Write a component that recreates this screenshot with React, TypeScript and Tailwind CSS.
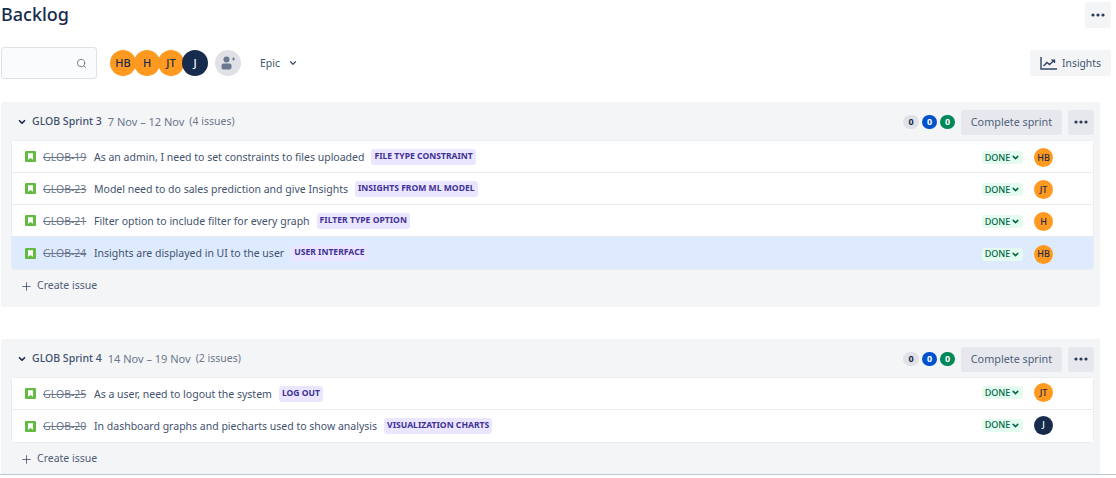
import { ChevronDown, Plus, Search } from "lucide-react";

type Issue = {
  id: string;
  title: string;
  epic: string;
  who: string;
  selected?: boolean;
};

const sprints: {
  name: string;
  dates: string;
  count: string;
  issues: Issue[];
}[] = [
  {
    name: "GLOB Sprint 3",
    dates: "7 Nov – 12 Nov",
    count: "(4 issues)",
    issues: [
      { id: "GLOB-19", title: "As an admin, I need to set constraints to files uploaded", epic: "FILE TYPE CONSTRAINT", who: "HB" },
      { id: "GLOB-23", title: "Model need to do sales prediction and give Insights", epic: "INSIGHTS FROM ML MODEL", who: "JT" },
      { id: "GLOB-21", title: "Filter option to include filter for every graph", epic: "FILTER TYPE OPTION", who: "H" },
      { id: "GLOB-24", title: "Insights are displayed in UI to the user", epic: "USER INTERFACE", who: "HB", selected: true },
    ],
  },
  {
    name: "GLOB Sprint 4",
    dates: "14 Nov – 19 Nov",
    count: "(2 issues)",
    issues: [
      { id: "GLOB-25", title: "As a user, need to logout the system", epic: "LOG OUT", who: "JT" },
      { id: "GLOB-20", title: "In dashboard graphs and piecharts used to show analysis", epic: "VISUALIZATION CHARTS", who: "J" },
    ],
  },
];

const Dots = () => (
  <svg width="16" height="4" viewBox="0 0 16 4" className="fill-[#2b3a55]">
    <circle cx="3" cy="2" r="1.6" />
    <circle cx="8" cy="2" r="1.6" />
    <circle cx="13" cy="2" r="1.6" />
  </svg>
);

const Avatar = ({ who, ring }: { who: string; ring?: boolean }) => (
  <div
    className={`flex shrink-0 items-center justify-center rounded-full font-medium ${
      ring ? "h-[26px] w-[26px] text-[11px]" : "h-[19px] w-[19px] text-[9px]"
    } ${who === "J" ? "bg-[#172b4d] text-white" : "bg-[#ff991f] text-[#172b4d]"}`}>
    {who}
  </div>
);

const StoryIcon = () => (
  <svg width="11" height="11" viewBox="0 0 11 11" className="shrink-0">
    <rect width="11" height="11" rx="1" fill="#65ba43" />
    <path d="M3 2.2h5v6.6L5.5 7 3 8.8z" fill="#fff" />
  </svg>
);

const Row = ({ issue, nudge }: { issue: Issue; nudge: string }) => (
  <div
    className={`flex h-8 items-center border-b border-[#ebecf0] pl-[13px] last:border-b-0 ${
      issue.selected ? "bg-[#deebff]" : "bg-white"
    }`}>
    <StoryIcon />
    <span className="ml-[7px] w-[44px] translate-y-px text-[10.5px] whitespace-nowrap text-[#6b778c] line-through">{issue.id}</span>
    <span className="ml-[7px] translate-y-px text-[10.5px] whitespace-nowrap text-[#42526e]">{issue.title}</span>
    <span className="ml-[7px] rounded-[3px] bg-[#eae6ff] px-[3px] pb-px text-[8.6px] leading-[15px] font-bold whitespace-nowrap text-[#403294]">
      {issue.epic}
    </span>
    <span className={`ml-auto flex h-[13px] w-[41px] items-center justify-center gap-px rounded-sm bg-[#e3fcef] text-[9px] font-medium text-[#006644] ${nudge}`}>
      DONE
      <ChevronDown size={9} strokeWidth={4} />
    </span>
    <div className={`mr-[40px] ml-[11px] ${nudge}`}>
      <Avatar who={issue.who} />
    </div>
  </div>
);

const Sprint = ({ sprint, nudge }: { sprint: (typeof sprints)[number]; nudge: string }) => (
  <section className="w-[1099px] shrink-0 rounded-[3px] bg-[#f4f5f7] pb-[10px]">
    <div className="flex h-[38px] items-center pt-[2px] pr-[6px] pl-[16px]">
      <ChevronDown size={10} strokeWidth={4} className="text-[#172b4d]" />
      <span className="ml-[5px] text-[10.5px] font-medium text-[#42526e]">{sprint.name}</span>
      <span className="ml-[6px] text-[11px] text-[#6b778c]">{sprint.dates}</span>
      <span className="ml-[5px] text-[10.5px] text-[#6b778c]">{sprint.count}</span>
      <div className="ml-auto flex items-center gap-[3px] text-[9px] font-bold">
        <span className="flex h-[14px] w-[16px] items-center justify-center rounded-full bg-[#dfe1e6] text-[#172b4d]">0</span>
        <span className="flex h-[14px] w-[15px] items-center justify-center rounded-full bg-[#0052cc] text-white">0</span>
        <span className="flex h-[14px] w-[15px] items-center justify-center rounded-full bg-[#00875a] text-white">0</span>
      </div>
      <button className="ml-[6px] h-[25px] w-[101px] rounded-[3px] bg-[#e6e8ed] text-[10.8px] text-[#505f79]">Complete sprint</button>
      <button className="ml-[6px] flex h-[25px] w-[26px] items-center justify-center rounded-[3px] bg-[#e6e8ed]">
        <Dots />
      </button>
    </div>
    <div className="mr-[6px] ml-[10px] rounded-sm border border-[#ebecf0] bg-white">
      {sprint.issues.map((issue) => (
        <Row key={issue.id} issue={issue} nudge={nudge} />
      ))}
    </div>
    <div className="mt-[5px] flex h-[22px] items-center gap-[4px] pl-[19px] text-[10.5px] text-[#505f79]">
      <Plus size={13} strokeWidth={1.4} className="text-[#344563]" />
      Create issue
    </div>
  </section>
);

export default function App() {
  return (
    <div className="h-[478px] w-[1116px] overflow-hidden bg-white font-['Noto_Sans','Open_Sans',sans-serif]">
      <div className="flex h-[47px] items-start justify-between pt-[2px] pr-[5px] pl-[1px]">
        <h1 className="-mt-[2px] text-[18px] leading-[28px] font-medium text-[#172b4d]">Backlog</h1>
        <button className="flex h-[26px] w-[26px] items-center justify-center rounded-[3px] bg-[#f4f5f7]">
          <Dots />
        </button>
      </div>

      <div className="flex h-[32px] items-center pr-[5px] pl-[1px]">
        <div className="flex h-[32px] w-[96px] items-center justify-end rounded-[3px] border border-[#dfe1e6] bg-[#fafbfc] pr-[9px]">
          <Search size={11} className="text-[#6b778c]" />
        </div>
        <div className="ml-[13px] flex -space-x-[2px]">
          {["HB", "H", "JT", "J"].map((who) => (
            <Avatar key={who} who={who} ring />
          ))}
        </div>
        <div className="ml-[7px] flex h-[26px] w-[26px] items-center justify-center rounded-full bg-[#dfe1e6]">
          <svg width="16" height="14" viewBox="0 0 16 14" className="fill-[#6b778c]">
            <circle cx="6.5" cy="3.5" r="3" />
            <rect x="1.5" y="7.5" width="10" height="6" rx="2" />
            <path d="M12 2.5h1v-1h1v1h1v1h-1v1h-1v-1h-1z" />
          </svg>
        </div>
        <span className="ml-[19px] translate-y-px text-[10.5px] text-[#42526e]">Epic</span>
        <ChevronDown size={10} strokeWidth={3} className="ml-[8px] text-[#42526e]" />
        <button className="ml-auto flex h-[26px] w-[81px] items-center justify-center gap-[5px] rounded-[3px] bg-[#f4f5f7] pt-px text-[10.3px] text-[#42526e]">
          <svg width="17" height="13" viewBox="0 0 17 13" fill="none" stroke="#344563" strokeWidth="1.4">
            <path d="M1 0v12h16" />
            <path d="M3.5 9l3.5-3.5 2.5 2L14 3.5M11.5 3.2H14.5v2.8" />
          </svg>
          Insights
        </button>
      </div>

      <div className="mt-[23px] flex h-[373px] flex-col gap-[32px] overflow-hidden border-b border-[#c1c7d0] pl-[1px]">
        <Sprint sprint={sprints[0]} nudge="translate-y-px" />
        <Sprint sprint={sprints[1]} nudge="-translate-y-px" />
      </div>
    </div>
  );
}
